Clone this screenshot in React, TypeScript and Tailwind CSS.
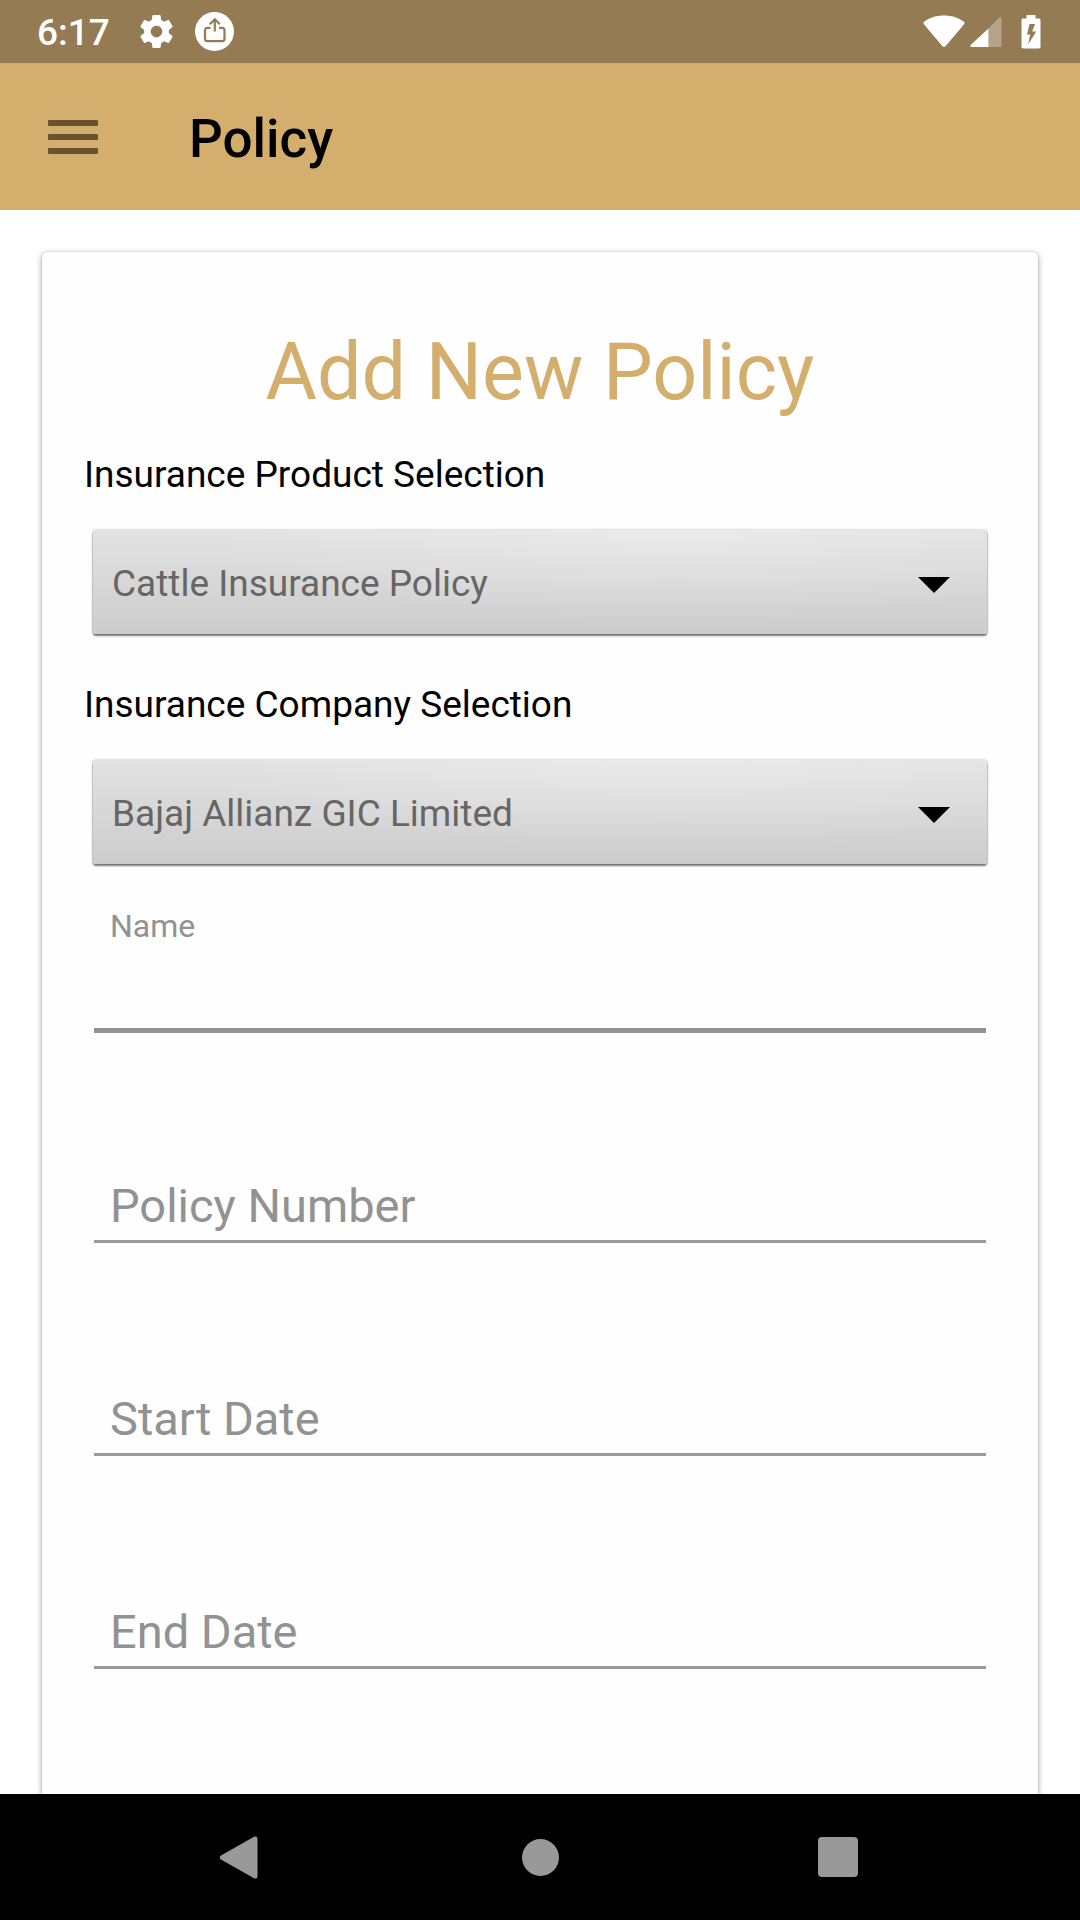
import { useState } from "react";

function StatusBar() {
  return (
    <header className="flex h-[63px] items-center bg-[#947b54] pr-[39px] pl-[37px] text-white">
      <span className="pt-[3px] text-[37px] leading-[44px] font-medium">6:17</span>
      <svg className="ml-[30px] size-[33px] shrink-0" viewBox="2 2 20 20" fill="currentColor" aria-hidden="true">
        <path d="M19.43 12.98c.04-.32.07-.64.07-.98s-.03-.66-.07-.98l2.11-1.65c.19-.15.24-.42.12-.64l-2-3.46c-.12-.22-.39-.3-.61-.22l-2.49 1c-.52-.4-1.08-.73-1.69-.98l-.38-2.65C14.46 2.18 14.25 2 14 2h-4c-.25 0-.46.18-.49.42l-.38 2.65c-.61.25-1.17.59-1.69.98l-2.49-1c-.23-.09-.49 0-.61.22l-2 3.46c-.13.22-.07.49.12.64l2.11 1.65c-.04.32-.07.65-.07.98s.03.66.07.98l-2.11 1.65c-.19.15-.24.42-.12.64l2 3.46c.12.22.39.3.61.22l2.49-1c.52.4 1.08.73 1.69.98l.38 2.65c.03.24.24.42.49.42h4c.25 0 .46-.18.49-.42l.38-2.65c.61-.25 1.17-.59 1.69-.98l2.49 1c.23.09.49 0 .61-.22l2-3.46c.12-.22.07-.49-.12-.64l-2.11-1.65zM12 15.5c-1.93 0-3.5-1.57-3.5-3.5s1.57-3.5 3.5-3.5 3.5 1.57 3.5 3.5-1.57 3.5-3.5 3.5z" />
      </svg>
      <svg className="ml-[22px] size-[39px] shrink-0" viewBox="0 0 39 39" fill="none" aria-hidden="true">
        <circle cx="19.5" cy="19.5" r="19.5" fill="#fff" />
        <g stroke="#947b54" strokeWidth="2.200">
          <path d="M15.500 15.800h-3a2.500 2.500 0 0 0-2.500 2.500v8.400a2.500 2.500 0 0 0 2.500 2.500h14.500a2.500 2.500 0 0 0 2.500-2.500v-8.400a2.500 2.500 0 0 0-2.500-2.500h-3" />
          <path d="M19.800 19.500V7.500M14.800 12.300l5-5 5 5" />
        </g>
      </svg>
      <div className="ml-auto flex items-center">
        <svg className="h-[33px] w-[42px]" viewBox="0 0 42 33" fill="currentColor" aria-hidden="true">
          <path d="M1.200 6.800C6.500 2.500 13.500.5 21 .5s14.500 2 19.800 6.300c.9.700 1 1.700.3 2.500L22.500 31.200c-.9 1-2.100 1-3 0L.900 9.300c-.7-.8-.6-1.800.3-2.500z" />
        </svg>
        <svg className="ml-[5px] size-[32px]" viewBox="0 0 32 32" fill="currentColor" aria-hidden="true">
          <path d="M18.500 12.500 29.300 1.600c.8-.8 2.200-.3 2.200.9V31h-13z" opacity=".3" />
          <path d="M18.500 12.500V31H1.500C.3 31-.2 29.800.6 29z" />
        </svg>
        <svg className="ml-[19px] h-[34px] w-[20px]" viewBox="0 0 20 34" fill="currentColor" aria-hidden="true">
          <path
            fillRule="evenodd"
            d="M5.500 0h9v3.500h3.300c1 0 1.700.7 1.700 1.700v26.600c0 1-.7 1.700-1.700 1.700H2.200c-1 0-1.700-.7-1.700-1.700V5.200c0-1 .7-1.700 1.700-1.700h3.300zM8.500 9 6 19.500h3.200L7.200 29.500l8-13h-4L14 9z"
          />
        </svg>
      </div>
    </header>
  );
}

function AppBar() {
  return (
    <div className="flex h-[147px] items-center bg-[#d3ae6d] px-[48px]">
      <button type="button" aria-label="Open menu" className="flex w-[50px] flex-col gap-[8px]">
        <span className="h-[6px] rounded-[1px] bg-[#69522e]" />
        <span className="h-[6px] rounded-[1px] bg-[#69522e]" />
        <span className="h-[6px] rounded-[1px] bg-[#69522e]" />
      </button>
      <h1 className="ml-[91px] pt-[4px] text-[53px] leading-[62px] font-medium text-black">Policy</h1>
    </div>
  );
}

function SelectField({ id, label, options }: { id: string; label: string; options: string[] }) {
  return (
    <div>
      <label htmlFor={id} className="block text-[37px] leading-[44px] text-black">
        {label}
      </label>
      <div className="relative mx-[9px] mt-[33px]">
        <select
          id={id}
          className="block h-[104px] w-full appearance-none rounded-[3px] bg-[radial-gradient(ellipse_55%_90%_at_65%_0%,rgba(255,255,255,0.3),rgba(255,255,255,0)),linear-gradient(to_bottom,#e2e2e2,#cccccc)] pt-[4px] pr-[80px] pl-[19px] text-[37px] text-[#666] shadow-[0_2px_2px_rgba(0,0,0,0.5),0_0_2px_rgba(0,0,0,0.4)] outline-none"
        >
          {options.map((option) => (
            <option key={option}>{option}</option>
          ))}
        </select>
        <svg
          className="pointer-events-none absolute top-[47px] right-[37px] h-[16px] w-[32px]"
          viewBox="0 0 32 16"
          aria-hidden="true"
        >
          <path d="M0 0h32L16 16z" fill="#000" />
        </svg>
      </div>
    </div>
  );
}

function LineField({ label }: { label: string }) {
  return (
    <input
      type="text"
      aria-label={label}
      placeholder={label}
      className="block h-[65px] w-full border-b-[3px] border-[#9a9a9a] bg-transparent px-[16px] pb-[7px] text-[47px] leading-[56px] text-black outline-none placeholder:text-[#929292] placeholder:opacity-100"
    />
  );
}

function SystemNav() {
  return (
    <nav className="flex h-[126px] shrink-0 items-center justify-center bg-black text-[#999]">
      <button type="button" aria-label="Back" className="flex w-[298px] justify-center">
        <svg className="mr-[6px] h-[43px] w-[38px]" viewBox="0 0 38 43" fill="currentColor" aria-hidden="true">
          <path d="M1 19.500 34 .8c1.700-.9 3.500 0 3.500 2v37.400c0 2-1.800 2.900-3.500 2L1 23.500c-1.500-1-1.500-3 0-4z" />
        </svg>
      </button>
      <button type="button" aria-label="Home" className="flex w-[298px] justify-center">
        <span className="size-[37px] rounded-full bg-[#999]" />
      </button>
      <button type="button" aria-label="Recent apps" className="flex w-[298px] justify-center">
        <span className="size-[40px] rounded-[4px] bg-[#999]" />
      </button>
    </nav>
  );
}

export default function App() {
  const [name, setName] = useState("");
  return (
    <div className="flex h-screen flex-col overflow-hidden bg-white font-[Roboto,sans-serif]">
      <StatusBar />
      <AppBar />
      <main className="flex min-h-0 flex-1 flex-col overflow-hidden px-[42px] pt-[42px]">
        <form className="flex-1 rounded-t-[5px] bg-[#fefefe] px-[42px] pt-[74px] shadow-[0_2px_6px_rgba(0,0,0,0.35),0_0_2px_rgba(0,0,0,0.2)]">
          <h2 className="text-center text-[79px] leading-[92px] text-[#d3ae6d]">Add New Policy</h2>
          <div className="mt-[35px] flex flex-col gap-[49px]">
            <SelectField id="product" label="Insurance Product Selection" options={["Cattle Insurance Policy"]} />
            <SelectField id="company" label="Insurance Company Selection" options={["Bajaj Allianz GIC Limited"]} />
          </div>
          <div className="mx-[10px] mt-[43px]">
            <label htmlFor="name" className="block px-[16px] text-[32px] leading-[38px] text-[#929292]">
              Name
            </label>
            <input
              id="name"
              type="text"
              value={name}
              onChange={(event) => setName(event.target.value)}
              className="block h-[88px] w-full border-b-[5px] border-[#929292] bg-transparent px-[16px] text-[47px] text-black outline-none"
            />
          </div>
          <div className="mx-[10px] mt-[145px] flex flex-col gap-[148px]">
            <LineField label="Policy Number" />
            <LineField label="Start Date" />
            <LineField label="End Date" />
          </div>
        </form>
      </main>
      <SystemNav />
    </div>
  );
}
